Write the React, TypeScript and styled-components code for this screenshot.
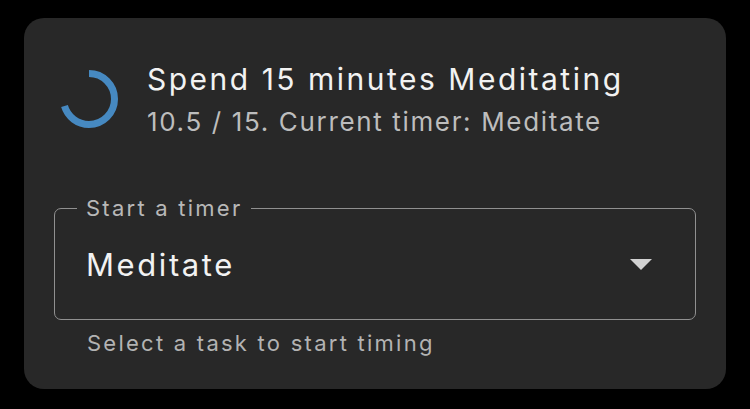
import React from 'react';
import styled, { createGlobalStyle } from 'styled-components';

const GlobalStyle = createGlobalStyle`
  html, body {
    margin: 0;
    padding: 0;
    background: #000;
  }
  body {
    font-family: Inter, "DejaVu Sans", sans-serif;
    -webkit-font-smoothing: antialiased;
  }
`;

const Page = styled.div`
  width: 750px;
  height: 409px;
  padding: 18px 24px 20px;
  box-sizing: border-box;
`;

const Card = styled.div`
  background: #282828;
  border-radius: 20px;
  height: 371px;
  box-sizing: border-box;
  padding: 38px 30px 0;
  display: flex;
  flex-direction: column;
`;

const Header = styled.div`
  display: flex;
  align-items: center;
  gap: 29px;
  padding-left: 6px;
`;

const TextBlock = styled.div`
  display: flex;
  flex-direction: column;
`;

const Title = styled.div`
  color: #f2f2f2;
  font-size: 30px;
  line-height: 46px;
  letter-spacing: 2.5px;
`;

const Subtitle = styled.div`
  color: #bdbdbd;
  font-size: 26px;
  line-height: 40px;
  letter-spacing: 1.65px;
`;

const Field = styled.fieldset`
  margin: 53px 0 0;
  padding: 0 0 11px;
  border: 1.5px solid #909090;
  border-radius: 7px;
  min-width: 0;
`;

const Legend = styled.legend`
  margin-left: 22px;
  padding: 0 9px;
  color: #b8b8b8;
  font-size: 22px;
  line-height: 26px;
  letter-spacing: 2.25px;
`;

const Row = styled.div`
  height: 87px;
  padding: 0 43px 0 31px;
  display: flex;
  align-items: center;
  justify-content: space-between;
`;

const Value = styled.span`
  color: #f2f2f2;
  font-size: 31px;
  letter-spacing: 2.6px;
`;

const Helper = styled.div`
  margin: 10px 0 0 33px;
  color: #b3b3b3;
  font-size: 22px;
  line-height: 26px;
  letter-spacing: 2.25px;
`;

interface RingProps {
  value: number;
  max: number;
  size?: number;
  thickness?: number;
}

const Ring: React.FC<RingProps> = ({ value, max, size = 58, thickness = 7 }) => {
  const r = (size - thickness) / 2;
  const c = 2 * Math.PI * r;
  const frac = Math.min(value / max, 1);
  return (
    <svg width={size} height={size} viewBox={`0 0 ${size} ${size}`}>
      <circle
        cx={size / 2}
        cy={size / 2}
        r={r}
        fill="none"
        stroke="#4689c1"
        strokeWidth={thickness}
        strokeDasharray={`${c * frac} ${c}`}
        transform={`rotate(-90 ${size / 2} ${size / 2})`}
      />
    </svg>
  );
};

const Caret = () => (
  <svg width="22" height="11" viewBox="0 0 22 11">
    <path d="M0 0 L22 0 L11 11 Z" fill="#d2d2d2" />
  </svg>
);

export default function App() {
  return (
    <>
      <GlobalStyle />
      <Page>
        <Card>
          <Header>
            <Ring value={10.5} max={15} />
            <TextBlock>
              <Title>Spend 15 minutes Meditating</Title>
              <Subtitle>10.5 / 15. Current timer: Meditate</Subtitle>
            </TextBlock>
          </Header>
          <Field>
            <Legend>Start a timer</Legend>
            <Row>
              <Value>Meditate</Value>
              <Caret />
            </Row>
          </Field>
          <Helper>Select a task to start timing</Helper>
        </Card>
      </Page>
    </>
  );
}
